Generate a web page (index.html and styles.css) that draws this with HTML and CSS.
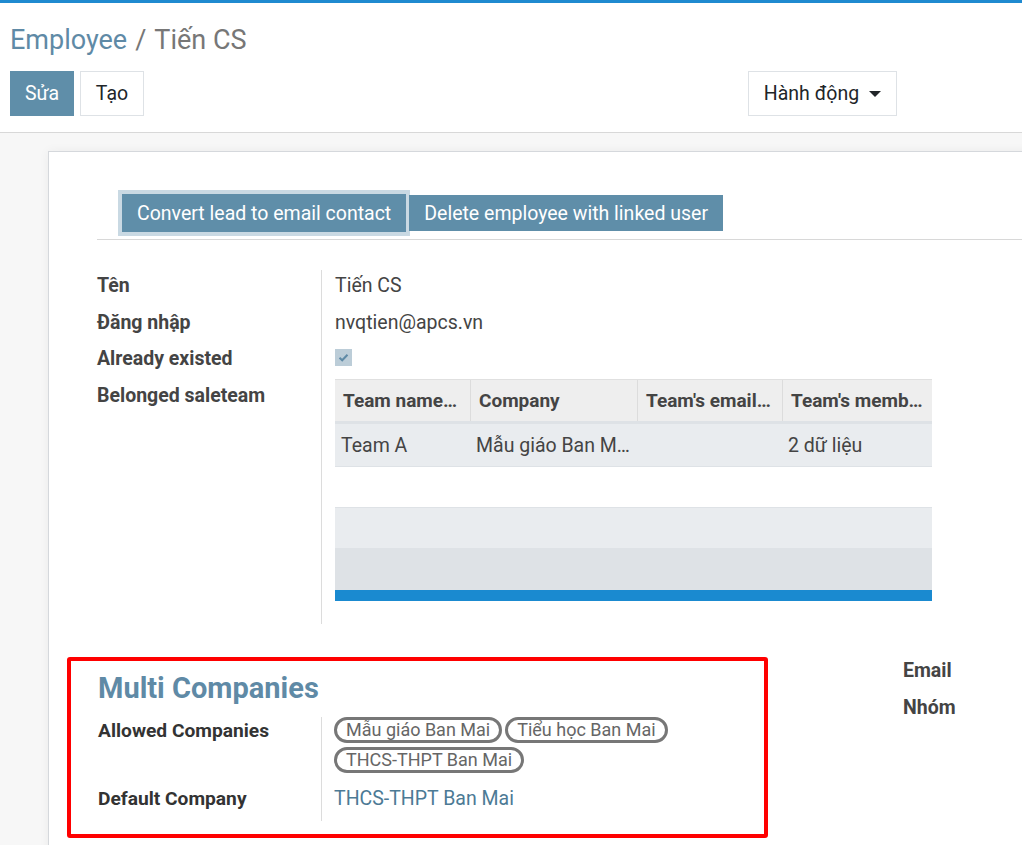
FILE: index.html
```html
<!DOCTYPE html>
<html lang="vi">
<head>
<meta charset="utf-8">
<title>Employee / Tiến CS</title>
<link rel="stylesheet" href="styles.css">
</head>
<body>
<div class="topline"></div>
<div class="control-panel">
  <h1 class="breadcrumb"><span class="bc-link">Employee</span><span class="bc-sep">/</span><span class="bc-cur">Tiến CS</span></h1>
  <div class="cp-buttons">
    <div class="cp-left">
      <button class="btn btn-primary">Sửa</button>
      <button class="btn btn-secondary">Tạo</button>
    </div>
    <button class="btn btn-secondary btn-action">Hành động <span class="caret"></span></button>
  </div>
</div>
<div class="content">
  <div class="sheet">
    <div class="header-bar">
      <button class="hbtn hbtn-focus">Convert lead to email contact</button>
      <button class="hbtn">Delete employee with linked user</button>
    </div>
    <div class="group main-group">
      <div class="labels">
        <div class="lbl">Tên</div>
        <div class="lbl">Đăng nhập</div>
        <div class="lbl">Already existed</div>
        <div class="lbl">Belonged saleteam</div>
      </div>
      <div class="values">
        <div class="val">Tiến CS</div>
        <div class="val">nvqtien@apcs.vn</div>
        <div class="val"><span class="checkbox"><svg width="11" height="9" viewBox="0 0 11 9"><path d="M1.5 4.8 L4.2 7.3 L9.5 1.7" fill="none" stroke="#5f8aa6" stroke-width="2"/></svg></span></div>
        <div class="table">
          <div class="thead">
            <div class="th c1">Team name…</div>
            <div class="th c2">Company</div>
            <div class="th c3">Team's email…</div>
            <div class="th c4">Team's memb…</div>
          </div>
          <div class="trow">
            <div class="td c1">Team A</div>
            <div class="td c2">Mẫu giáo Ban M…</div>
            <div class="td c3"></div>
            <div class="td c4">2 dữ liệu</div>
          </div>
          <div class="tgap"></div>
          <div class="tfoot1"></div>
          <div class="tfoot2"></div>
          <div class="tbar"></div>
        </div>
      </div>
    </div>
    <div class="group2">
      <div class="multi">
        <h2 class="multi-title">Multi Companies</h2>
        <div class="mgrid">
          <div class="mlabels">
            <div class="mlbl">Allowed Companies</div>
            <div class="mlbl mlbl-default">Default Company</div>
          </div>
          <div class="mvalues">
            <div class="tags">
              <span class="tag">Mẫu giáo Ban Mai</span>
              <span class="tag">Tiểu học Ban Mai</span>
              <span class="tag">THCS-THPT Ban Mai</span>
            </div>
            <div class="mlink">THCS-THPT Ban Mai</div>
          </div>
        </div>
      </div>
      <div class="right-col">
        <div class="lbl">Email</div>
        <div class="lbl">Nhóm</div>
      </div>
    </div>
  </div>
</div>
</body>
</html>
```

FILE: styles.css
```css
html, body {
  margin: 0;
  padding: 0;
  overflow: hidden;
  background: #ffffff;
  font-family: Roboto, "Noto Sans", sans-serif;
  color: #444;
}
.topline {
  height: 3px;
  background: #1f8ad0;
}
.control-panel {
  background: #fff;
  border-bottom: 1px solid #d8d8d8;
  padding: 18px 10px 16px 10px;
}
.breadcrumb {
  margin: 0;
  font-size: 27px;
  font-weight: 400;
  line-height: 38px;
  height: 36px;
}
.bc-link { color: #5f8aa6; }
.bc-sep { color: #777; margin: 0 8px; }
.bc-cur { color: #777; }
.cp-buttons {
  display: flex;
  align-items: center;
  margin-top: 14px;
  width: 887px;
  justify-content: space-between;
}
.cp-left { display: flex; gap: 6px; }
.btn {
  font-family: Roboto, sans-serif;
  font-size: 19.5px;
  height: 45px;
  padding: 0 15px;
  border: 1px solid #dee2e6;
  background: #fff;
  color: #212529;
  cursor: pointer;
}
.btn-primary {
  background: #5f8ea9;
  border-color: #5f8ea9;
  color: #fff;
  width: 64px;
  padding: 0;
}
.btn-secondary { width: 64px; padding: 0; }
.btn-action {
  width: 149px;
  display: flex;
  align-items: center;
  justify-content: center;
  gap: 10px;
}
.caret {
  display: inline-block;
  width: 0;
  height: 0;
  border-left: 6px solid transparent;
  border-right: 6px solid transparent;
  border-top: 6px solid #212529;
}
.content {
  background: #f7f7f7;
  padding: 18px 0 0 48px;
  height: 720px;
}
.sheet {
  background: #fff;
  border: 1px solid #d5d8dc;
  border-right: none;
  width: 1000px;
  height: 720px;
  box-shadow: 0 0 10px rgba(0,0,0,0.05);
  padding: 41px 0 0 48px;
  box-sizing: border-box;
}
.header-bar {
  display: flex;
  align-items: center;
  border-bottom: 1px solid #d8d8d8;
  padding: 0 0 6px 22px;
}
.hbtn {
  font-family: Roboto, sans-serif;
  font-size: 19.5px;
  height: 36px;
  padding: 0 15px;
  background: #5f8ea9;
  color: #fff;
  border: none;
  white-space: nowrap;
}
.hbtn-focus {
  height: 40px;
  box-shadow: 0 0 0 3px #c9d9e3;
  border: 1px solid #c9d9e3;
  margin-left: 2px;
  margin-right: 2px;
  padding: 0 15px;
}
.group {
  display: flex;
  margin-top: 30px;
}
.labels {
  width: 224px;
  border-right: 1px solid #dcdcdc;
  height: 354px;
  flex: none;
}
.lbl {
  font-size: 19.5px;
  font-weight: 700;
  color: #444;
  height: 36.5px;
  line-height: 31px;
  white-space: nowrap;
}
.values {
  padding-left: 13px;
  width: 596px;
}
.val {
  font-size: 19.5px;
  color: #444;
  height: 36.5px;
  line-height: 31px;
}
.checkbox {
  display: inline-flex;
  align-items: center;
  justify-content: center;
  width: 17px;
  height: 17px;
  background: #bccdd8;
  margin-top: 6px;
  vertical-align: top;
}
.table {
  margin-top: -1px;
  width: 597px;
}
.thead {
  display: flex;
  background: #eeeeee;
  border-top: 1px solid #e0e0e0;
  border-bottom: 3px solid #dee2e6;
  height: 41px;
}
.th {
  font-size: 19px;
  font-weight: 700;
  color: #444;
  line-height: 41px;
  padding-left: 8px;
  box-sizing: border-box;
  border-left: 1px solid #dcdcdc;
  white-space: nowrap;
  overflow: hidden;
}
.th.c1 { border-left: none; }
.c1 { width: 135px; }
.c2 { width: 167px; }
.c3 { width: 145px; }
.c4 { width: 150px; }
.trow {
  display: flex;
  background: #e9ecef;
  height: 42px;
  border-bottom: 1px solid #dee2e6;
}
.td {
  font-size: 19.5px;
  color: #444;
  line-height: 44px;
  padding-left: 6px;
  box-sizing: border-box;
  white-space: nowrap;
  overflow: hidden;
}
.tgap { height: 40px; border-bottom: 1px solid #dee2e6; }
.tfoot1 { height: 40px; background: #e9ecef; }
.tfoot2 { height: 42px; background: #dee2e6; }
.tbar { height: 11px; background: #1a8ad0; }
.group2 {
  display: flex;
  margin-top: 33px;
  margin-left: -30px;
}
.multi {
  width: 666px;
  height: 164px;
  border: 4px solid #ff0000;
  border-radius: 3px;
  padding: 9px 0 0 27px;
  flex: none;
}
.multi-title {
  margin: 0;
  font-size: 29px;
  font-weight: 700;
  color: #5f8aa6;
  line-height: 36px;
}
.mgrid {
  display: flex;
  margin-top: 11px;
}
.mlabels {
  width: 223px;
  border-right: 1px solid #dcdcdc;
  height: 104px;
  flex: none;
}
.mlbl {
  font-size: 19.2px;
  font-weight: 700;
  color: #333;
  line-height: 28px;
  white-space: nowrap;
}
.mlbl-default { margin-top: 40px; }
.mvalues { padding-left: 12px; }
.tags {
  display: flex;
  flex-wrap: wrap;
  width: 340px;
  gap: 4px 3px;
}
.tag {
  font-size: 18px;
  color: #666;
  border: 3px solid #777;
  border-radius: 14px;
  padding: 0 9px;
  height: 20px;
  line-height: 20px;
  white-space: nowrap;
}
.mlink {
  margin-top: 12px;
  font-size: 19.5px;
  color: #4c7a95;
  line-height: 28px;
}
.right-col {
  margin-left: 135px;
  margin-top: -2px;
}
```
